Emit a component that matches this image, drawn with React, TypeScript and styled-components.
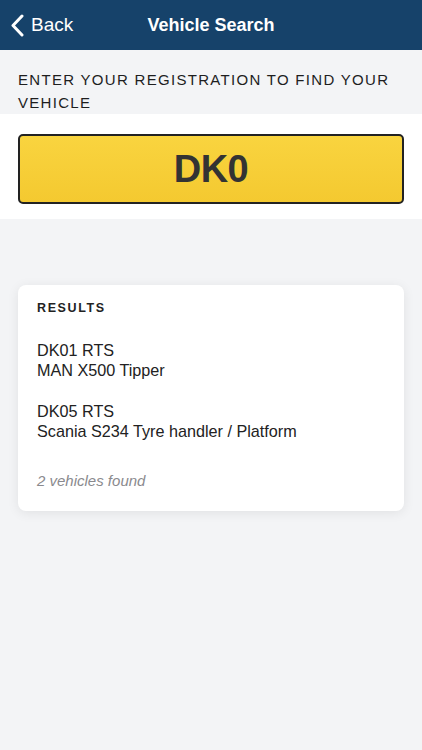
import * as React from 'react';
import styled, { createGlobalStyle } from 'styled-components';

const GlobalStyle = createGlobalStyle`
    html, body {
        margin: 0;
        padding: 0;
        background: #f3f4f6;
        font-family: "Liberation Sans", Arial, sans-serif;
    }
`;

const Page = styled.div`
    min-height: 750px;
    background: #f3f4f6;
`;

const NavBar = styled.div`
    height: 50px;
    background: #16426a;
    position: relative;
    display: flex;
    align-items: center;
    justify-content: center;
    color: white;
`;

const BackButton = styled.div`
    position: absolute;
    left: 10px;
    top: 0;
    height: 50px;
    display: flex;
    align-items: center;
    gap: 7px;
    font-size: 19px;
    color: #fff;
`;

const Title = styled.div`
    font-size: 18px;
    font-weight: bold;
`;

const Prompt = styled.div`
    padding: 18px 18px 0 18px;
    font-size: 15px;
    line-height: 23px;
    letter-spacing: 1.3px;
    color: #1e1e1e;
`;

const PlateArea = styled.div`
    background: #fff;
    padding: 20px 18px 15px 18px;
`;

const Plate = styled.div`
    height: 66px;
    border: 2px solid #222;
    border-radius: 5px;
    background: linear-gradient(180deg, #f9d43f 0%, #f4c930 100%);
    display: flex;
    align-items: center;
    justify-content: center;
    font-size: 38px;
    font-weight: bold;
    letter-spacing: -0.5px;
    color: #333;
`;

const Card = styled.div`
    margin: 66px 18px 0 18px;
    background: #fff;
    border-radius: 8px;
    box-shadow: 0 2px 12px rgba(0, 0, 0, 0.08);
    padding: 16px 19px 22px 19px;
`;

const CardHeading = styled.div`
    font-size: 12.5px;
    font-weight: bold;
    letter-spacing: 1.6px;
    color: #222;
    margin-bottom: 25px;
`;

const Vehicle = styled.div`
    font-size: 16.2px;
    line-height: 20px;
    color: #222;
    margin-bottom: 21px;
`;

const Summary = styled.div`
    font-size: 15px;
    font-style: italic;
    color: #8a8a8e;
    margin-top: 31px;
`;

type vehicleType = {
    reg: string;
    model: string;
};

const vehicles: vehicleType[] = [
    { reg: 'DK01 RTS', model: 'MAN X500 Tipper' },
    { reg: 'DK05 RTS', model: 'Scania S234 Tyre handler / Platform' },
];

const App = () => {
    return (
        <Page>
            <GlobalStyle />
            <NavBar>
                <BackButton>
                    <svg width="14" height="23" viewBox="0 0 14 23">
                        <path d="M12 2 L3 11.5 L12 21" fill="none" stroke="#fff" strokeWidth="3" strokeLinecap="round" strokeLinejoin="round" />
                    </svg>
                    Back
                </BackButton>
                <Title>Vehicle Search</Title>
            </NavBar>
            <Prompt>ENTER YOUR REGISTRATION TO FIND YOUR VEHICLE</Prompt>
            <PlateArea>
                <Plate>DK0</Plate>
            </PlateArea>
            <Card>
                <CardHeading>RESULTS</CardHeading>
                {vehicles.map((val: vehicleType, key: number) => {
                    return (
                        <Vehicle key={key}>
                            <div>{val.reg}</div>
                            <div>{val.model}</div>
                        </Vehicle>
                    );
                })}
                <Summary>{vehicles.length} vehicles found</Summary>
            </Card>
        </Page>
    );
};

export default App;
